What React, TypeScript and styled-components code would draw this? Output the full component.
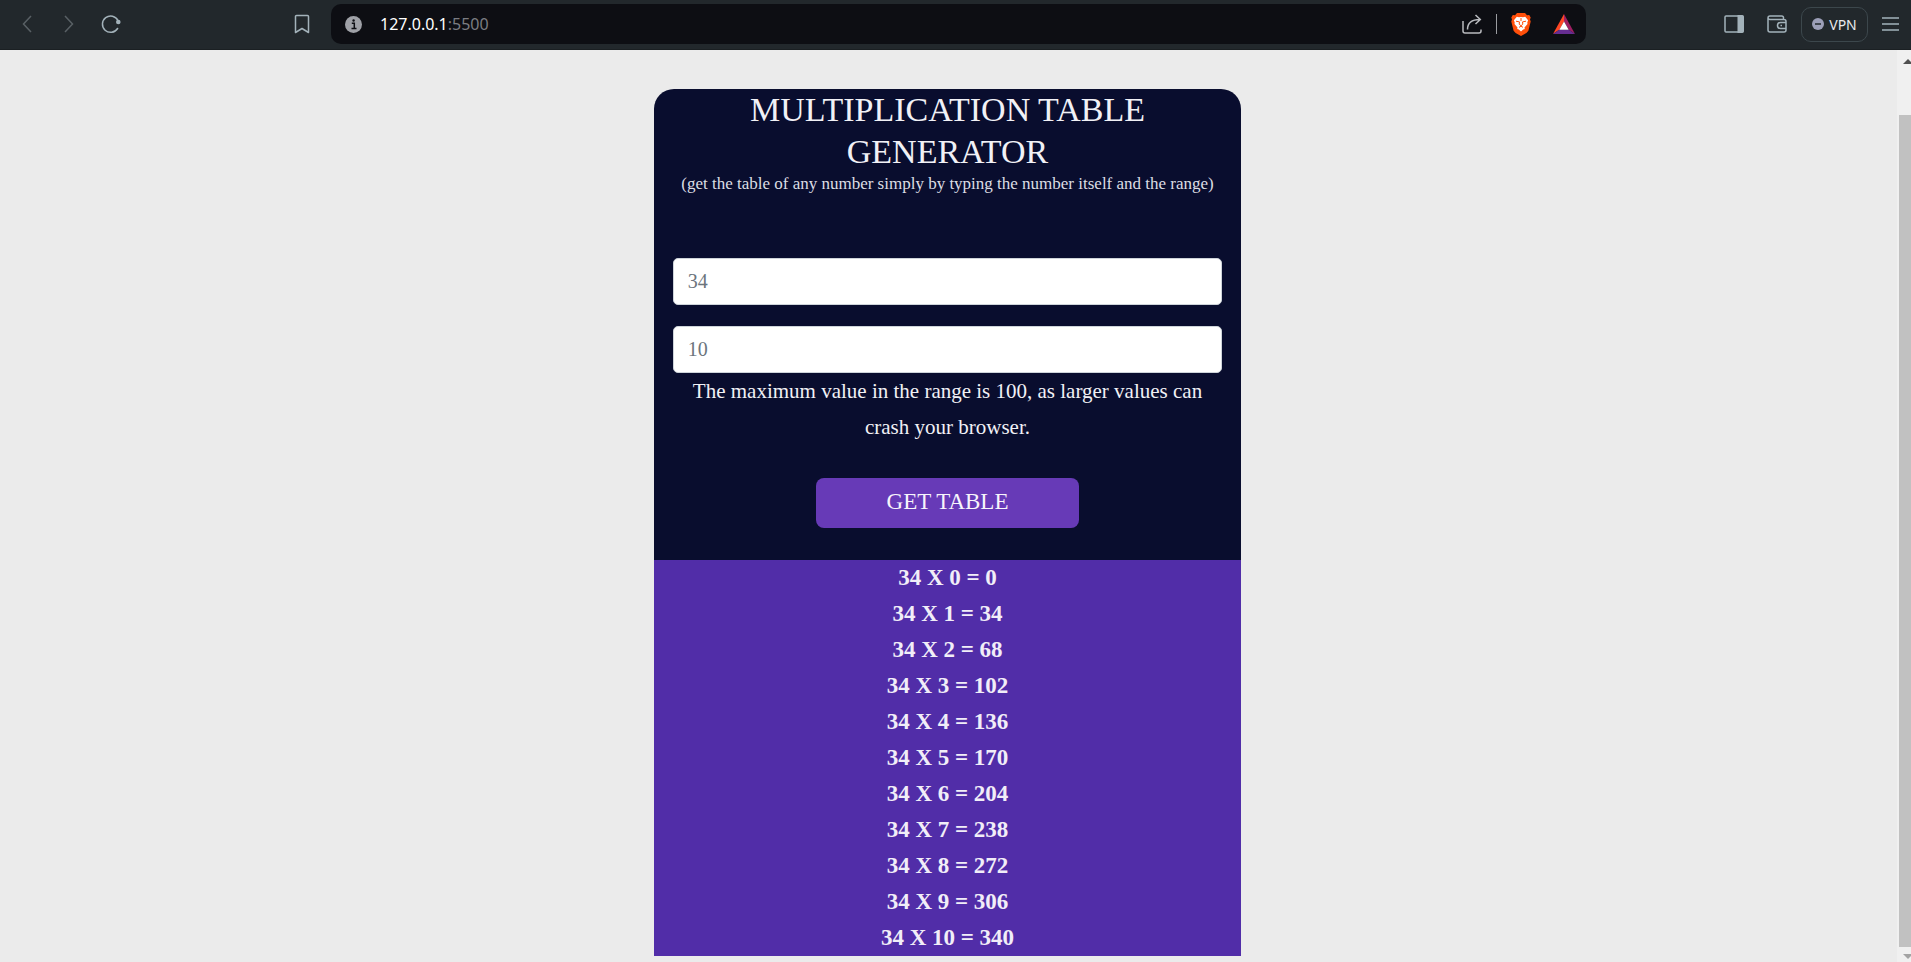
import React, { useState } from "react";
import styled, { createGlobalStyle, css } from "styled-components";

const GlobalStyle = createGlobalStyle`
  * { box-sizing: border-box; }
  body { margin: 0; background: #ebebeb; }
`;

const serif = css`font-family: "Liberation Serif", serif;`;

const Page = styled.div`
  min-height: 100vh;
  display: flex;
  flex-direction: column;
  ${serif}
`;

const Toolbar = styled.header`
  display: flex;
  align-items: center;
  height: 50px;
  padding-bottom: 1px;
  background: #22282c;
  border-bottom: 1px solid #1b2023;
  font-family: "Noto Sans", sans-serif;
`;

const NavGroup = styled.nav`
  display: flex;
  align-items: center;
  flex: 0 0 331px;
  padding: 0 17px 0 15px;
  gap: 18px;
`;

const ActionGroup = styled.div`
  display: flex;
  align-items: center;
  justify-content: flex-end;
  flex: 0 0 325px;
  padding-right: 9px;
  gap: 12px;
`;

const IconButton = styled.button<{ $dim?: boolean; $end?: boolean; $color?: string }>`
  display: grid;
  place-items: center;
  width: 24px;
  height: 32px;
  padding: 0;
  border: 0;
  background: none;
  color: ${(p) => (p.$dim ? "#596065" : p.$color ?? "#a3b2ba")};
  margin-left: ${(p) => (p.$end ? "auto" : "0")};
`;

const AddressBar = styled.div`
  display: flex;
  align-items: center;
  flex: 1;
  height: 40px;
  padding: 0 10px;
  border-radius: 10px;
  background: #0d0e13;
`;

const Address = styled.a`
  flex: 1;
  margin-left: 15px;
  font-size: 16px;
  line-height: 24px;
  color: #7b7d82;
  text-decoration: none;
`;

const Host = styled.span`
  color: #ffffff;
`;

const AddressTools = styled.div`
  display: flex;
  align-items: center;
  gap: 12px;
`;

const Divider = styled.span`
  width: 1px;
  height: 20px;
  background: #9a9ca0;
`;

const IconPair = styled.div`
  display: flex;
  gap: 19px;
`;

const MenuPair = styled.div`
  display: flex;
  align-items: center;
  gap: 10px;
`;

const VpnButton = styled.button`
  display: flex;
  align-items: center;
  justify-content: center;
  gap: 5px;
  width: 67px;
  height: 35px;
  padding: 0;
  border: 1px solid #3c474c;
  border-radius: 10px;
  background: none;
  color: #e8eaec;
  font-family: "Noto Sans", sans-serif;
  font-size: 14px;
`;

const Viewport = styled.div`
  display: flex;
  flex: 1;
`;

const Main = styled.main`
  flex: 1;
  padding: 39px 0 6px;
`;

const Card = styled.section`
  width: 31%;
  min-width: 560px;
  margin: 0 auto;
  border-radius: 20px 20px 0 0;
  background: #090d2e;
  color: #f1f1f6;
  text-align: center;
`;

const Form = styled.form`
  display: flex;
  flex-direction: column;
  padding: 0 19px 32px;
`;

const Title = styled.h1`
  margin: 0;
  font-size: 34px;
  font-weight: 400;
  line-height: 42px;
  text-transform: uppercase;
`;

const Subtitle = styled.p`
  margin: 0 0 64px;
  font-size: 17px;
  line-height: 21px;
  color: #dcdde4;
`;

const Fields = styled.div`
  display: flex;
  flex-direction: column;
  gap: 21px;
`;

const Field = styled.input`
  width: 100%;
  height: 47px;
  padding: 8px 14px;
  border: 1px solid #ced4da;
  border-radius: 5px;
  background: #ffffff;
  ${serif}
  font-size: 20px;
  color: #212529;
  &::placeholder { color: #6c757d; opacity: 1; }
`;

const Hint = styled.p`
  margin: 0 0 33px;
  font-size: 21px;
  line-height: 36px;
`;

const SubmitButton = styled.button`
  align-self: center;
  width: 48%;
  height: 50px;
  padding: 0 0 2px;
  border: 0;
  border-radius: 8px;
  background: #673ab7;
  color: #f7f5fb;
  ${serif}
  font-size: 23px;
`;

const Results = styled.ul`
  margin: 0;
  padding: 0;
  list-style: none;
  background: #512da8;
  color: #f1eef8;
  font-size: 23px;
  font-weight: 700;
  line-height: 36px;
`;

const Scrollbar = styled.div`
  display: flex;
  flex-direction: column;
  align-items: flex-end;
  width: 16px;
  padding: 9px 0 3px;
  border-left: 2px solid #ebebeb;
  background: #f0f0f0;
`;

const ScrollThumb = styled.span`
  flex: 1;
  width: 12px;
  margin: 51px 0 7px;
  background: #c1c1c1;
`;

const line = { fill: "none", stroke: "currentColor", strokeWidth: 1.5 } as const;

const BackIcon = () => (
  <svg width="12" height="20" viewBox="0 0 12 20" {...line}><path d="M10 2 2.5 10 10 18" /></svg>
);

const ForwardIcon = () => (
  <svg width="12" height="20" viewBox="0 0 12 20" {...line}><path d="M2 2 9.500 10 2 18" /></svg>
);

const ReloadIcon = () => (
  <svg width="20" height="20" viewBox="0 0 20 20" {...line} strokeLinecap="round">
    <path d="M16.600 14.500A8.200 8.200 0 1 1 17 6.500" />
    <circle cx="17.300" cy="8" r="2.300" fill="currentColor" stroke="none" />
  </svg>
);

const BookmarkIcon = () => (
  <svg width="16" height="20" viewBox="0 0 16 20" {...line} strokeLinejoin="round">
    <path d="M2.500 1.500h11a1 1 0 0 1 1 1v16L8 14.500l-6.500 4v-16a1 1 0 0 1 1-1Z" />
  </svg>
);

const InfoIcon = () => (
  <svg width="17" height="17" viewBox="0 0 17 17">
    <circle cx="8.500" cy="8.500" r="8.500" fill="#9fa1a7" />
    <path d="M6.800 7.200h2.500v5.300M6.500 12.500h5" stroke="#0d0e13" strokeWidth="1.500" fill="none" />
    <circle cx="8.600" cy="4.500" r="1.200" fill="#0d0e13" />
  </svg>
);

const ShareIcon = () => (
  <svg width="20" height="20" viewBox="0 0 20 20" {...line}>
    <path d="M1 7v10a2 2 0 0 0 2 2h14a2 2 0 0 0 2-2v-1.500" />
    <path d="M5.500 15.500C5.500 9.500 9 5.500 18 5.500M13.500 1l4.800 4.500-4.800 4.500" />
  </svg>
);

const BraveIcon = () => (
  <svg width="20" height="23" viewBox="0 0 20 23">
    <path d="M6 0h8l2 2.200 2.200-.2 1.500 2.500-.7 2 .7 2-2.300 9.200-2 2.300L10 23l-5.400-3-2-2.300L.3 8.500l.7-2-.7-2L1.800 2l2.200.2Z" fill="#ff4f0a" />
    <path d="M5.800 3.800 8 4.300l2-.4 2 .4 2.200-.5 2.900 3.500-.8 2.200.2 1.500-3 3.600.3 1.500-1.600.3L10 18.500l-2.200-2.100-1.600-.3.300-1.500L3.500 11l.2-1.500L2.900 7.300Z" fill="#fff" />
    <path d="m5 8.200 3.500.7-.3 2.300L10 12.800l1.800-1.600-.3-2.300 3.500-.7M8 14.300l2-1 2 1M10 5v3" fill="none" stroke="#ff4f0a" strokeWidth="1" />
  </svg>
);

const RewardsIcon = () => (
  <svg width="22" height="20" viewBox="0 0 22 20">
    <path d="M11 0v7.500L6.500 15.500 0 20Z" fill="#ff4724" />
    <path d="m11 0 11 20-6.500-4.500L11 7.500Z" fill="#9e1f63" />
    <path d="M0 20h22l-6.500-4.500h-9Z" fill="#662d91" />
    <path d="m11 7.500 4.700 8.200H6.300Z" fill="#fff" />
  </svg>
);

const PanelIcon = () => (
  <svg width="20" height="18" viewBox="0 0 20 18">
    <rect x="1" y="1" width="18" height="16" rx="1" {...line} />
    <path d="M13.500 0H18a2 2 0 0 1 2 2v14a2 2 0 0 1-2 2h-4.500Z" fill="currentColor" />
  </svg>
);

const WalletIcon = () => (
  <svg width="20" height="18" viewBox="0 0 20 18" {...line}>
    <path d="M16.500 4.500V2.800A1.800 1.800 0 0 0 14.700 1H3a2 2 0 0 0-2 2v12a2 2 0 0 0 2 2h14a2 2 0 0 0 2-2V6.500a2 2 0 0 0-2-2H3a2 2 0 0 1-2-1.700" />
    <path d="M19 7.500h-5.500a3 3 0 0 0 0 6H19M13.500 10.500h1.500" />
  </svg>
);

const StatusIcon = () => (
  <svg width="12" height="12" viewBox="0 0 12 12">
    <circle cx="6" cy="6" r="6" fill="#9c9fb8" />
    <path d="M3 6h6" stroke="#22282c" strokeWidth="1.500" />
  </svg>
);

const MenuIcon = () => (
  <svg width="17" height="14" viewBox="0 0 17 14" {...line}><path d="M0 1h17M0 7h17M0 13h17" /></svg>
);

const ArrowIcon = ({ down = false }: { down?: boolean }) => (
  <svg width="8" height="5" viewBox="0 0 8 5">
    <path d={down ? "M0 0h10L5 5Z" : "M0 5h10L5 0Z"} fill={down ? "#a3a3a3" : "#505050"} />
  </svg>
);

const TOP_ROW = 10;

export default function App() {
  const [number, setNumber] = useState("");
  const [range, setRange] = useState("");
  const [table, setTable] = useState({ base: 34, last: TOP_ROW });

  const generate = (event: React.FormEvent) => {
    event.preventDefault();
    setTable({ base: Number(number || 34), last: Math.min(100, Number(range || TOP_ROW)) });
  };

  return (
    <Page>
      <GlobalStyle />
      <Toolbar>
        <NavGroup aria-label="Browser">
          <IconButton $dim aria-label="Back"><BackIcon /></IconButton>
          <IconButton $dim aria-label="Forward"><ForwardIcon /></IconButton>
          <IconButton aria-label="Reload"><ReloadIcon /></IconButton>
          <IconButton $end aria-label="Bookmark"><BookmarkIcon /></IconButton>
        </NavGroup>
        <AddressBar>
          <IconButton aria-label="Site information"><InfoIcon /></IconButton>
          <Address href="#"><Host>127.0.0.1</Host>:5500</Address>
          <AddressTools>
            <IconButton $color="#b9bbbf" aria-label="Share"><ShareIcon /></IconButton>
            <Divider />
            <IconPair>
              <IconButton aria-label="Shields"><BraveIcon /></IconButton>
              <IconButton aria-label="Rewards"><RewardsIcon /></IconButton>
            </IconPair>
          </AddressTools>
        </AddressBar>
        <ActionGroup>
          <IconPair>
            <IconButton aria-label="Sidebar"><PanelIcon /></IconButton>
            <IconButton aria-label="Wallet"><WalletIcon /></IconButton>
          </IconPair>
          <MenuPair>
            <VpnButton><StatusIcon />VPN</VpnButton>
            <IconButton aria-label="Menu"><MenuIcon /></IconButton>
          </MenuPair>
        </ActionGroup>
      </Toolbar>
      <Viewport>
        <Main>
          <Card>
            <Form onSubmit={generate}>
              <Title>Multiplication table generator</Title>
              <Subtitle>(get the table of any number simply by typing the number itself and the range)</Subtitle>
              <Fields>
                <Field aria-label="Number" inputMode="numeric" placeholder="34" value={number} onChange={(e) => setNumber(e.target.value)} />
                <Field aria-label="Range" inputMode="numeric" placeholder="10" value={range} onChange={(e) => setRange(e.target.value)} />
              </Fields>
              <Hint>The maximum value in the range is 100, as larger values can crash your browser.</Hint>
              <SubmitButton type="submit">GET TABLE</SubmitButton>
            </Form>
            <Results>
              {Array.from({ length: table.last + 1 }, (_, i) => (
                <li key={i}>{`${table.base} X ${i} = ${table.base * i}`}</li>
              ))}
            </Results>
          </Card>
        </Main>
        <Scrollbar aria-hidden="true">
          <ArrowIcon />
          <ScrollThumb />
          <ArrowIcon down />
        </Scrollbar>
      </Viewport>
    </Page>
  );
}
